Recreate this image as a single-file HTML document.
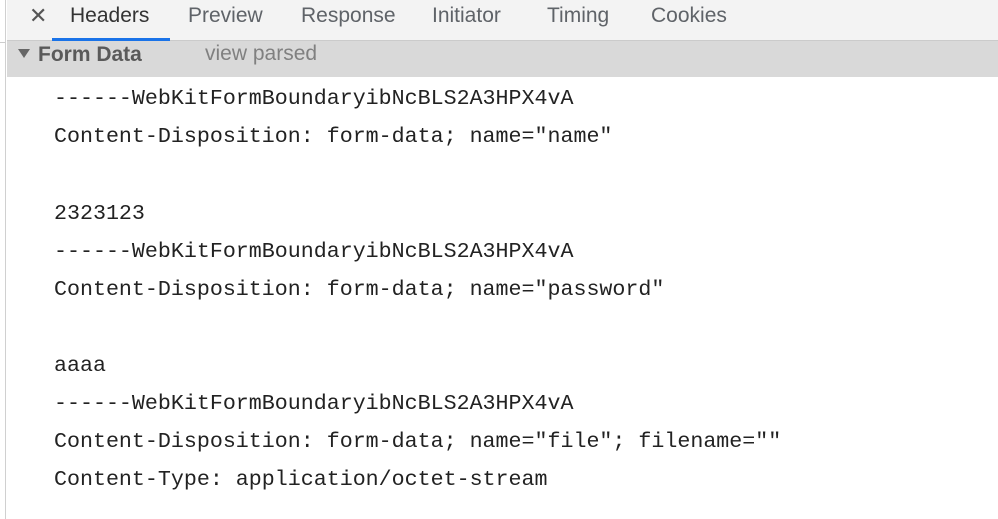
<!DOCTYPE html>
<html><head><meta charset="utf-8"><style>
*{margin:0;padding:0;box-sizing:border-box}
body{width:998px;height:519px;overflow:hidden;background:#fff;position:relative;font-family:"Liberation Sans",sans-serif}
.lp{position:absolute;left:0;top:0;width:6px;height:519px;background:#fff;border-right:1px solid #d0d0d0}
.lp i{position:absolute;left:0;top:42px;width:5px;height:1px;background:#ccc}
.tabs{position:absolute;left:7px;top:0;right:0;height:41px;background:#f3f3f3;border-bottom:1px solid #cbcbcb}
.t{position:absolute;top:4px;font-size:21px;color:#5f6368}
.x{position:absolute;left:22px;top:3px;font-size:22px;color:#555}
.ul{position:absolute;left:45px;top:38px;width:118px;height:3px;background:#1a73e8}
.fd{position:absolute;left:7px;top:41px;right:0;height:36px;background:#d9d9d9}
.tri{position:absolute;left:11px;top:8px;width:0;height:0;border-left:6px solid transparent;border-right:6px solid transparent;border-top:9px solid #666}
.fdt{position:absolute;left:31px;top:2px;font-size:21px;font-weight:bold;color:#5a5a5a}
.vp{position:absolute;left:198px;top:1px;font-size:21px;color:#808080}
.l{position:absolute;left:54px;font-family:"Liberation Mono",monospace;font-size:21.65px;color:#222;white-space:pre}
</style></head><body>
<div class="lp"><i></i></div>
<div class="tabs">
<span class="x">✕</span>
<span class="t" style="left:63px;color:#333">Headers</span>
<span class="t" style="left:181px">Preview</span>
<span class="t" style="left:294px">Response</span>
<span class="t" style="left:425px">Initiator</span>
<span class="t" style="left:540px">Timing</span>
<span class="t" style="left:644px">Cookies</span>
<div class="ul"></div>
</div>
<div class="fd"><div class="tri"></div><span class="fdt">Form Data</span><span class="vp">view parsed</span></div>
<div class="l" style="top:86px">------WebKitFormBoundaryibNcBLS2A3HPX4vA</div>
<div class="l" style="top:124px">Content-Disposition: form-data; name="name"</div>
<div class="l" style="top:201px">2323123</div>
<div class="l" style="top:239px">------WebKitFormBoundaryibNcBLS2A3HPX4vA</div>
<div class="l" style="top:277px">Content-Disposition: form-data; name="password"</div>
<div class="l" style="top:353px">aaaa</div>
<div class="l" style="top:391px">------WebKitFormBoundaryibNcBLS2A3HPX4vA</div>
<div class="l" style="top:429px">Content-Disposition: form-data; name="file"; filename=""</div>
<div class="l" style="top:467px">Content-Type: application/octet-stream</div>
</body></html>
